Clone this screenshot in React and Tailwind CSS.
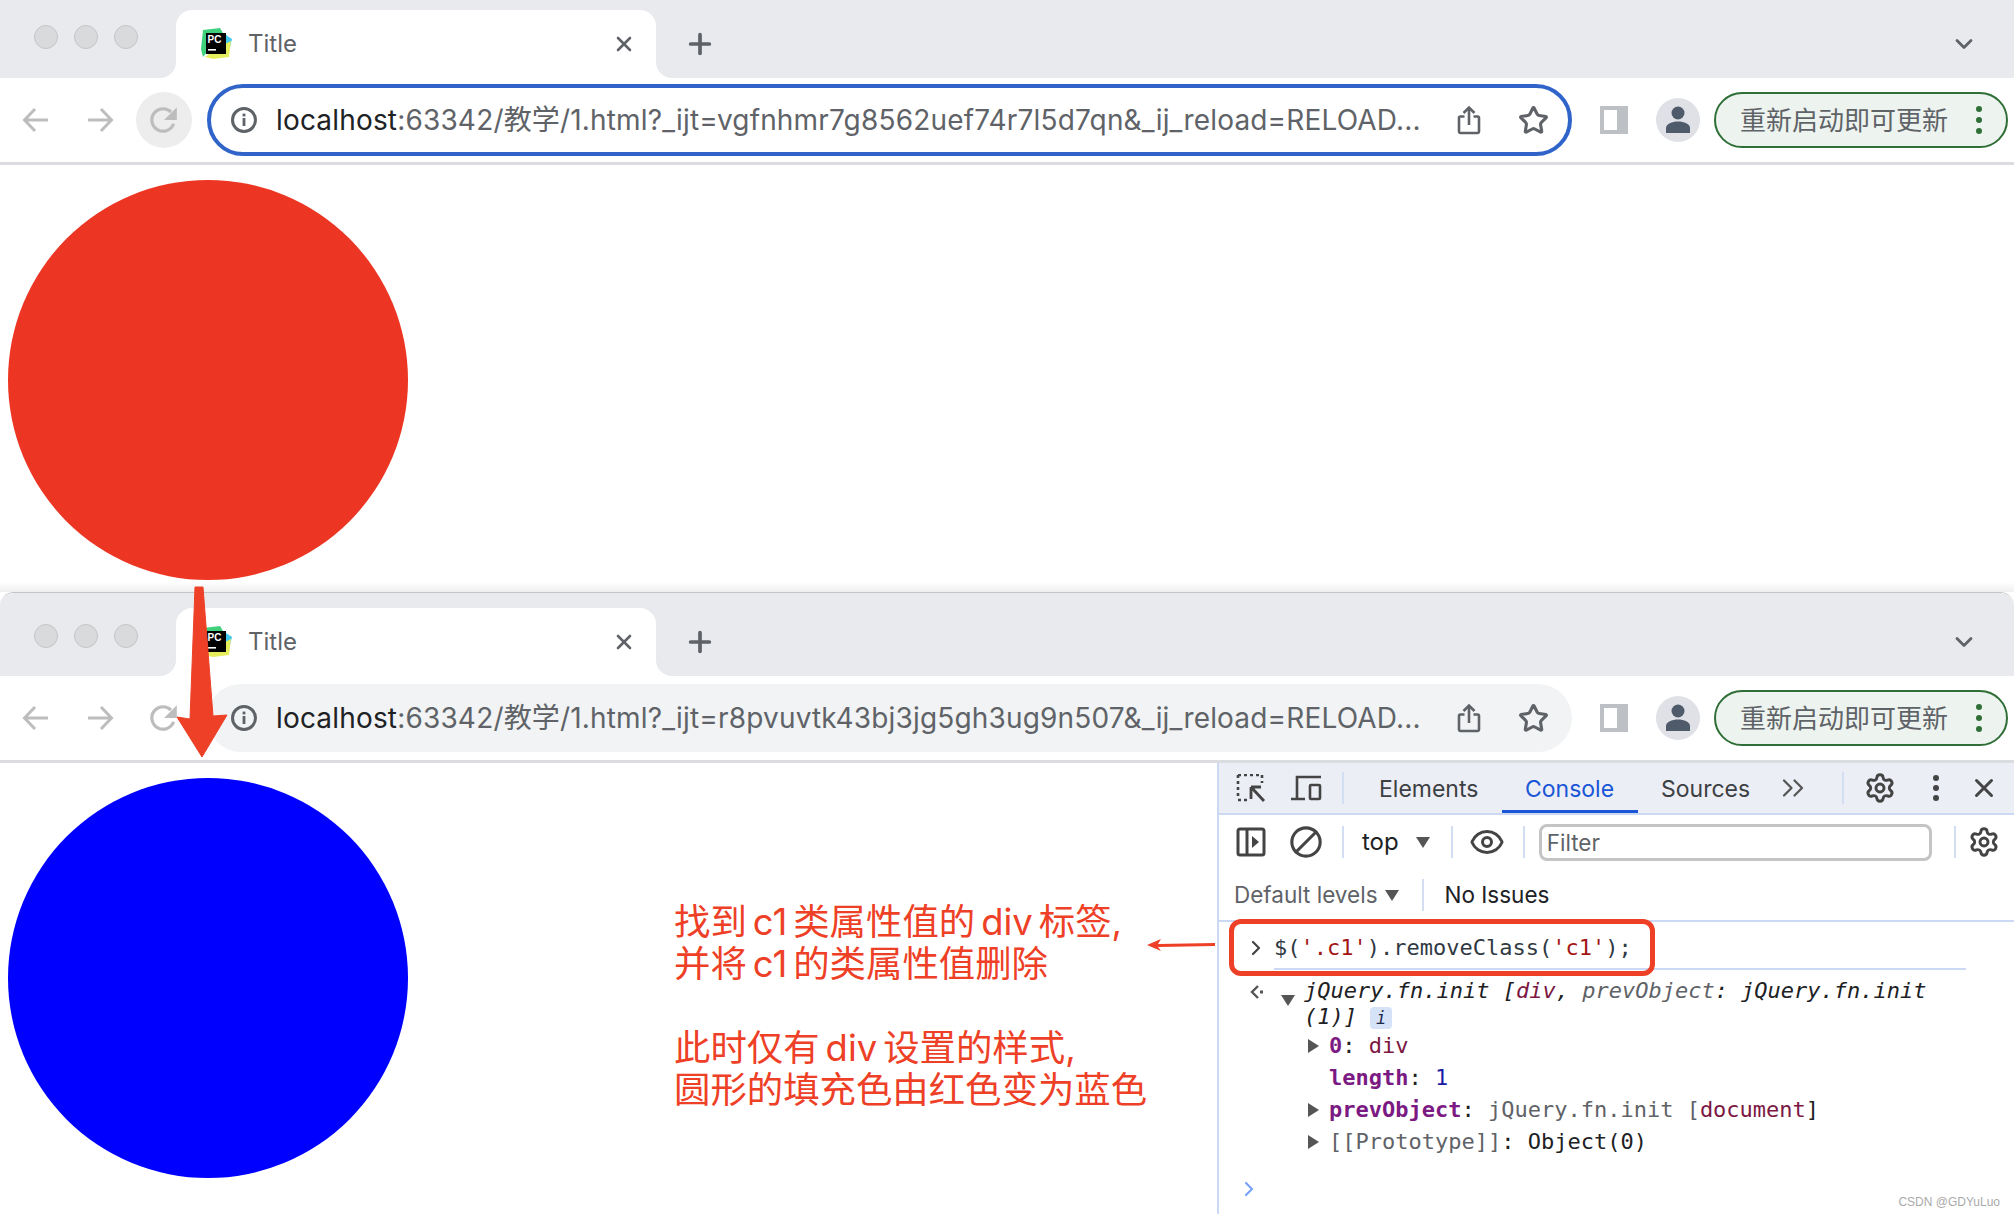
import { Star, X, Plus, ChevronDown, Settings, ChevronRight, ChevronsRight, Eye, Ban } from 'lucide-react';

function PyCharmIcon() {
  return (
    <svg width="34" height="34" viewBox="0 0 34 34" className="shrink-0">
      <polygon points="4,3 21,1 24,6 4,30 2,22" fill="#3fd07c" />
      <polygon points="24,6 33,12 30,24 18,12" fill="#43c8f0" />
      <polygon points="6,30 14,32 30,30 32,14 20,20" fill="#e6ee5c" />
      <rect x="7" y="6" width="20" height="21" fill="#000" />
      <text x="8.5" y="16" fontSize="10" fontWeight="700" fill="#fff" className="[font-family:'Liberation_Sans',sans-serif]">PC</text>
      <rect x="9" y="22" width="8" height="1.6" fill="#fff" />
    </svg>
  );
}

function ReloadIcon() {
  return (
    <svg width="32" height="32" viewBox="0 0 30 30" fill="none">
      <path d="M24 18.5A10.5 10.5 0 1 1 21.5 7.5" stroke="#bdbdbd" strokeWidth="3" />
      <polygon points="27,3 27,15 15,15" fill="#bdbdbd" />
    </svg>
  );
}

function ArrowIcon({ flip }) {
  return (
    <svg width="28" height="26" viewBox="0 0 28 26" fill="none" className={flip ? 'rotate-180' : ''}>
      <path d="M26 13H3M13 2 2.5 13 13 24" stroke="#bdbdbd" strokeWidth="3" />
    </svg>
  );
}

function InfoIcon() {
  return (
    <svg width="28" height="28" viewBox="0 0 28 28" fill="none" className="shrink-0">
      <circle cx="14" cy="14" r="11.5" stroke="#5f6368" strokeWidth="3" />
      <rect x="12.6" y="12" width="2.8" height="8" fill="#5f6368" />
      <rect x="12.6" y="7.6" width="2.8" height="2.8" fill="#5f6368" />
    </svg>
  );
}

function ShareIcon() {
  return (
    <svg width="24" height="30" viewBox="0 0 24 30" fill="none">
      <path d="M7.5 11.5H3.5a1.5 1.5 0 0 0-1.5 1.5v13.5A1.5 1.5 0 0 0 3.5 28h17a1.5 1.5 0 0 0 1.5-1.5V13a1.5 1.5 0 0 0-1.5-1.5h-4M12 20V2.5M6.5 8 12 2.5 17.5 8" stroke="#5f6368" strokeWidth="2.6" />
    </svg>
  );
}

function Tabstrip({ topPad }) {
  return (
    <div className="flex bg-white">
      <div className={`w-[176px] bg-[#e8eaed] rounded-br-[16px] flex items-center gap-[16px] pl-[34px] ${topPad ? 'h-[83px] pt-[2px]' : 'h-[78px] pb-[4px]'}`}>
        {[0, 1, 2].map((i) => (
          <div key={i} className="w-[24px] h-[24px] rounded-full bg-[#d9dadc] border border-[#c4c5c7]" />
        ))}
      </div>
      <div className={`w-[480px] bg-[#e8eaed] flex ${topPad ? 'pt-[15px]' : 'pt-[10px]'}`}>
        <div className="flex-1 bg-white rounded-t-[16px] flex items-center pl-[23px] pr-[20px]">
          <PyCharmIcon />
          <span className="ml-[15px] text-[24px] text-[#5f6368]">Title</span>
          <X size={24} strokeWidth={2.6} className="ml-auto text-[#5f6368]" />
        </div>
      </div>
      <div className={`flex-1 bg-[#e8eaed] rounded-bl-[16px] flex items-center pl-[28px] pr-[36px] ${topPad ? 'pt-[15px]' : 'pt-[10px]'}`}>
        <Plus size={32} strokeWidth={2.8} className="text-[#5f6368]" />
        <ChevronDown size={28} strokeWidth={2.4} className="ml-auto text-[#5f6368]" />
      </div>
    </div>
  );
}

function Toolbar({ url, focused }) {
  return (
    <div className="h-[84px] flex items-center pl-[4px] bg-white border-b-[3px] border-[#dadce0] box-content">
      <div className="w-[64px] flex justify-center"><ArrowIcon /></div>
      <div className="w-[64px] flex justify-center"><ArrowIcon flip /></div>
      <div className={`ml-[4px] w-[56px] h-[56px] rounded-full flex items-center justify-center ${focused ? 'bg-[#ededed]' : ''}`}><ReloadIcon /></div>
      <div className={`ml-[15px] w-[1365px] rounded-full flex items-center text-[#5f6368] ${focused ? 'h-[72px] border-[4px] border-[#3064c8] bg-white pl-[19px]' : 'h-[68px] pl-[23px] bg-[#f1f3f4]'}`}>
        <InfoIcon />
        <span className="ml-[18px] text-[28px] tracking-[0.17px] whitespace-nowrap w-[1156px] shrink-0">
          <span className="text-[#202124]">localhost</span>{url}
        </span>
        <span className="ml-[25px] w-[24px] flex justify-center shrink-0"><ShareIcon /></span>
        <Star size={31} strokeWidth={2.4} className="ml-[37px] shrink-0 text-[#5f6368]" />
      </div>
      <div className="ml-[28px] w-[28px] h-[28px] bg-[#bdc1c6] pl-[4px] py-[4px] pr-[11px]">
        <div className="w-full h-full bg-white" />
      </div>
      <div className="ml-[28px] w-[44px] h-[44px] rounded-full bg-[#dfe1e7] flex items-center justify-center">
        <svg width="26" height="28" viewBox="0 0 26 28" fill="#4f5a6b">
          <circle cx="13" cy="7" r="6.5" />
          <path d="M1 27v-5c0-4 6-6.5 12-6.5s12 2.500 12 6.500v5z" />
        </svg>
      </div>
      <div className="ml-[14px] w-[294px] h-[56px] rounded-full border-[2px] border-[#2f6f37] bg-[#edf3ee] flex items-center pl-[24px] text-[26px] text-[#5f6368]">
        <span>重新启动即可更新</span>
        <div className="ml-[28px] flex flex-col gap-[5px]">
          {[0, 1, 2].map((i) => <div key={i} className="w-[6px] h-[6px] rounded-full bg-[#2f6f37]" />)}
        </div>
      </div>
    </div>
  );
}

function Divider() {
  return <div className="w-[2px] h-[32px] bg-[#d4def3] shrink-0" />;
}

function Caret({ down, className }) {
  return <span className={`${down ? 'border-l-[7px] border-r-[7px] border-t-[11px] border-l-transparent border-r-transparent border-t-[#555]' : 'border-t-[7px] border-b-[7px] border-l-[11px] border-t-transparent border-b-transparent border-l-[#555]'} w-0 h-0 shrink-0 ${className || ''}`} />;
}

function DevTools() {
  return (
    <div className="relative w-[797px] border-l-[2px] border-[#cbd9f5] text-[#3c4043]">
      <div className="h-[50px] bg-[#eceef5] border-b-[2px] border-[#cbd9f5] flex items-center box-content text-[23px] relative">
        <svg width="30" height="28" viewBox="0 0 30 28" fill="none" className="ml-[17px]" stroke="#444">
          <path d="M2 1h24M2 1v24M26 1v8M2 26h10" strokeWidth="2.600" strokeDasharray="3 3" />
          <path d="M15 13v12M15 13h10M15 13l13 14" strokeWidth="2.800" />
        </svg>
        <svg width="32" height="26" viewBox="0 0 32 26" fill="none" className="ml-[25px]" stroke="#444" strokeWidth="2.600">
          <path d="M6 24V2h24M0 24h14" />
          <rect x="19" y="10" width="10" height="14" rx="1" />
        </svg>
        <div className="ml-[19px]"><Divider /></div>
        <span className="ml-[35px] w-[146px] pt-[2px]">Elements</span>
        <span className="text-[#1a56d6] w-[136px] pt-[2px]">Console</span>
        <span className="pt-[2px]">Sources</span>
        <ChevronsRight size={36} strokeWidth={1.5} className="ml-[25px] text-[#555]" />
        <div className="ml-[31px]"><Divider /></div>
        <Settings size={32} strokeWidth={2.2} className="ml-[20px] text-[#444]" />
        <div className="ml-[37px] flex flex-col gap-[4px]">
          {[0, 1, 2].map((i) => <div key={i} className="w-[6px] h-[6px] rounded-full bg-[#444]" />)}
        </div>
        <X size={30} strokeWidth={2.4} className="ml-[30px] text-[#444]" />
        <div className="absolute left-[283px] bottom-0 w-[136px] h-[3px] bg-[#1a56d6]" />
      </div>
      <div className="h-[54px] flex items-center text-[24px]">
        <svg width="30" height="30" viewBox="0 0 30 30" fill="none" className="ml-[17px]">
          <rect x="2" y="2" width="26" height="26" rx="2" stroke="#444" strokeWidth="3" />
          <path d="M11 2v26" stroke="#444" strokeWidth="3" />
          <polygon points="16,9 23,15 16,21" fill="#444" />
        </svg>
        <Ban size={34} strokeWidth={2.2} className="ml-[23px] -scale-x-100 text-[#444]" />
        <div className="ml-[19px]"><Divider /></div>
        <span className="ml-[18px] text-[#202124]">top</span>
        <Caret down className="ml-[17px]" />
        <div className="ml-[21px]"><Divider /></div>
        <Eye size={36} strokeWidth={2} className="ml-[16px] text-[#444]" />
        <div className="ml-[18px]"><Divider /></div>
        <div className="ml-[14px] w-[393px] h-[37px] border-[3px] border-[#c4c4c4] rounded-[8px] flex items-center pl-[5px] pt-[2px] text-[#5f6368] text-[22.5px]">Filter</div>
        <div className="ml-[22px]"><Divider /></div>
        <Settings size={32} strokeWidth={2.2} className="ml-[12px] text-[#444]" />
      </div>
      <div className="h-[50px] pt-[1px] flex items-center text-[22.5px] border-b-[2px] border-[#cbd9f5] box-content">
        <span className="ml-[15px] text-[#5f6368]">Default levels</span>
        <Caret down className="ml-[7px]" />
        <div className="ml-[23px]"><Divider /></div>
        <span className="ml-[21px] text-[#202124]">No Issues</span>
      </div>
      <div className="[font-family:'DejaVu_Sans_Mono',monospace] text-[22px] text-[#303942]">
        <div className="relative h-[47px] mt-[1px] pt-[2px] flex items-center">
          <ChevronRight size={24} strokeWidth={2.2} className="ml-[25px] text-[#444]" />
          <span className="ml-[6px] whitespace-pre">
            $(<span className="text-[#a31515]">'.c1'</span>).removeClass(<span className="text-[#a31515]">'c1'</span>);
          </span>
          <div className="absolute left-[55px] right-[48px] bottom-0 h-[2px] bg-[#cbd9f5]" />
          <div className="absolute left-[10px] top-[-4px] w-[426px] h-[57px] border-[5px] border-[#ee4026] rounded-[12px]" />
        </div>
        <div className="relative pl-[85px] pt-[8px] italic leading-[26px] text-[#202124]">
          <svg width="16" height="18" viewBox="0 0 16 18" fill="none" className="absolute left-[30px] top-[13px]">
            <path d="M9 3 3 9l6 6" stroke="#555" strokeWidth="2.400" />
            <rect x="11" y="7.500" width="3" height="3" fill="#555" />
          </svg>
          <Caret down className="absolute left-[62px] top-[25px]" />
          jQuery.fn.init [<span className="text-[#7c1742]">div</span>, <span className="text-[#5f6368]">prevObject</span>: jQuery.fn.init
          <br />
          (1)] <span className="inline-block w-[22px] h-[22px] bg-[#d6e2f8] rounded-[4px] text-center text-[17px] leading-[22px] text-[#1c2a4a]">i</span>
        </div>
        <div className="pl-[110px] text-[#202124] leading-[32px] whitespace-pre">
          <div className="relative">
            <Caret className="absolute left-[-21px] top-[9px]" />
            <b className="text-[#7b1a82]">0</b>: <span className="text-[#7c1742]">div</span>
          </div>
          <div>
            <b className="text-[#7b1a82]">length</b>: <span className="text-[#1a1aa6]">1</span>
          </div>
          <div className="relative">
            <Caret className="absolute left-[-21px] top-[9px]" />
            <b className="text-[#7b1a82]">prevObject</b>: <span className="text-[#5f6368]">jQuery.fn.init [<span className="text-[#7c1742]">document</span><span className="text-[#202124]">]</span></span>
          </div>
          <div className="relative">
            <Caret className="absolute left-[-21px] top-[9px]" />
            <span className="text-[#5f6368]">[[Prototype]]</span>: <span>Object(0)</span>
          </div>
        </div>
        <ChevronRight size={24} strokeWidth={2.2} className="ml-[18px] mt-[19px] text-[#7aa2f7]" />
      </div>
      <span className="absolute right-[14px] bottom-[3px] text-[12px] text-[#aaa] [font-family:'Liberation_Sans',sans-serif]">CSDN @GDYuLuo</span>
    </div>
  );
}

export default function App() {
  return (
    <div className="relative w-[2014px] h-[1214px] overflow-hidden bg-white [font-family:Inter,'Noto_Sans_CJK_SC',sans-serif]">
      <div className="h-[592px] flex flex-col">
        <Tabstrip />
        <Toolbar focused url=":63342/教学/1.html?_ijt=vgfnhmr7g8562uef74r7l5d7qn&_ij_reload=RELOAD..." />
        <div className="relative flex-1 pt-[15px] pl-[8px]">
          <div className="w-[400px] h-[400px] rounded-full bg-[#ec3522]" />
          <div className="absolute left-0 right-0 bottom-0 h-[10px] bg-linear-to-b from-white to-[#efefef]" />
        </div>
      </div>
      <div className="h-[622px] flex flex-col rounded-t-[14px] border-t border-[#c4c4c4] overflow-hidden bg-white">
        <Tabstrip topPad />
        <Toolbar url=":63342/教学/1.html?_ijt=r8pvuvtk43bj3jg5gh3ug9n507&_ij_reload=RELOAD..." />
        <div className="flex-1 flex min-h-0">
          <div className="w-[1217px] flex shrink-0">
            <div className="w-[400px] h-[400px] ml-[8px] mt-[15px] rounded-full bg-[#0000ff] shrink-0" />
            <div className="ml-[266px] mt-[138px] text-[36.4px] leading-[42px] text-[#ee4026] whitespace-pre">
              {'找到\u2006c1\u2006类属性值的\u2006div\u2006标签,\n并将\u2006c1\u2006的类属性值删除\n\n此时仅有\u2006div\u2006设置的样式,\n圆形的填充色由红色变为蓝色'}
            </div>
          </div>
          <DevTools />
        </div>
      </div>
      {/* red annotations drawn over both windows */}
      <svg width="60" height="180" viewBox="0 0 60 180" className="absolute left-[172px] top-[582px]">
        <polygon points="23,5 31,5 41,134 55,133 30,175 5,135 18,137" fill="#ee4026" stroke="#ee4026" strokeLinejoin="round" />
      </svg>
      <svg width="72" height="14" viewBox="0 0 72 14" className="absolute left-[1145px] top-[938px]">
        <polygon points="2,7 16,1 13,6 70,5 70,8 13,9 16,13" fill="#ee4026" />
      </svg>
    </div>
  );
}
